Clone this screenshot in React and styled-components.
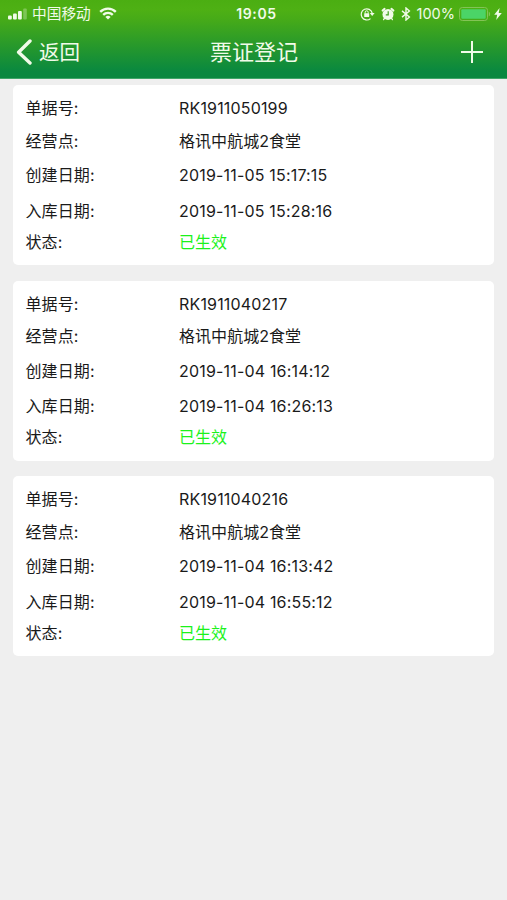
import styled, { createGlobalStyle } from "styled-components";

const GlobalStyle = createGlobalStyle`
  * {
    box-sizing: border-box;
  }
  body {
    margin: 0;
    background-color: #efefef;
    font-family: Inter, "Noto Sans CJK SC", sans-serif;
    color: #1a1a1a;
  }
`;

const Page = styled.div`
  min-height: 100vh;
  background-color: #efefef;
`;

const Header = styled.header`
  height: 79px;
  background: linear-gradient(#4bae12 0%, #4eb014 12%, #47ab18 24%, #26982c 60%, #098840 92%, #098840 100%);
  border-bottom: 1px solid #3fa56a;
  color: #f1fbe9;
`;

const StatusBar = styled.div`
  display: grid;
  grid-template-columns: 1fr auto 1fr;
  align-items: center;
  height: 27px;
  padding: 0 5px 0 8px;
  font-size: 14px;
`;

const StatusGroup = styled.div`
  display: flex;
  align-items: center;
  justify-content: ${(props) => (props.$end ? "flex-end" : "flex-start")};
  height: 27px;
  line-height: 27px;
  white-space: nowrap;

  svg {
    flex: none;
  }
`;

const Carrier = styled.span`
  margin: 2px 8px 0 5px;
  font-size: 14.7px;
`;

const Clock = styled.span`
  padding-left: 3px;
  font-size: 14px;
  font-weight: 600;
  letter-spacing: 0.6px;
`;

const StatusIcons = styled.div`
  display: flex;
  align-items: center;
  gap: 6px;
`;

const Percent = styled.span`
  margin: 0 4px 0 6px;
  font-size: 14.5px;
`;

const NavBar = styled.nav`
  display: grid;
  grid-template-columns: 1fr auto 1fr;
  align-items: center;
  height: 50px;
  padding: 0 24px 0 16px;
`;

const BackButton = styled.button`
  display: flex;
  align-items: center;
  gap: 7px;
  padding: 0;
  border: 0;
  background: none;
  color: inherit;
  font-family: inherit;
  font-size: 20.5px;
  line-height: 30px;
`;

const BackText = styled.span`
  padding-top: 1px;
`;

const Title = styled.h1`
  margin: 0;
  padding-left: 9px;
  font-size: 22px;
  line-height: 30px;
  font-weight: 400;
`;

const AddButton = styled.button`
  display: flex;
  justify-self: end;
  padding: 0;
  border: 0;
  background: none;
  color: inherit;
`;

const List = styled.main`
  display: flex;
  flex-direction: column;
  gap: 15.5px;
  padding: 6px 13px 0;
`;

const Card = styled.section`
  height: 180px;
  padding: 7px 13px 0 12.5px;
  border-radius: 5px;
  background-color: #ffffff;
`;

const Row = styled.div`
  display: grid;
  grid-template-columns: 153.5px 1fr;
  align-items: center;
  height: ${(props) => props.$height}px;
  font-size: 16px;
  line-height: 24px;
`;

const Label = styled.span`
  letter-spacing: 0.1px;
`;

const Value = styled.span`
  color: ${(props) => (props.$active ? "#1bf21b" : "inherit")};
  letter-spacing: ${(props) => props.$spacing || 0}px;
`;

const SignalIcon = () => (
  <svg width="19" height="12" viewBox="0 0 19 12" fill="currentColor">
    <rect x="0" y="7.5" width="3.8" height="4" rx="1" />
    <rect x="5" y="5.5" width="3.8" height="6" rx="1" />
    <rect x="10" y="3" width="3.8" height="8.5" rx="1" />
    <rect x="15.2" y="0.5" width="3.6" height="11" rx="1" opacity="0.3" />
  </svg>
);

const WifiIcon = () => (
  <svg width="18" height="13" viewBox="0 0 18 13" fill="none" stroke="currentColor" strokeWidth="2.4">
    <path d="M1.2 4.8a11.2 11.2 0 0 1 15.6 0" />
    <path d="M4.2 7.8a7 7 0 0 1 9.6 0" />
    <path d="M9 12.6 6.4 10a3.8 3.8 0 0 1 5.2 0z" fill="currentColor" stroke="none" />
  </svg>
);

const RotationLockIcon = () => (
  <svg width="15" height="14" viewBox="0 0 15 14" fill="none" stroke="currentColor">
    <path d="M10.5 11.6A5.6 5.6 0 1 1 12.2 6" strokeWidth="1.2" />
    <path d="M9.8 6h4.8l-2.4 3z" fill="currentColor" stroke="none" />
    <rect x="4.2" y="6.3" width="5" height="3.8" rx="0.5" fill="currentColor" stroke="none" />
    <path d="M5.2 6.5V5.3a1.5 1.5 0 0 1 3 0v1.2" />
  </svg>
);

const AlarmIcon = () => (
  <svg width="14" height="14" viewBox="0 0 14 14">
    <circle cx="7" cy="7.4" r="5.5" fill="currentColor" />
    <path d="M1.6 3.6 3.6 1.8M12.4 3.6 10.4 1.8" stroke="currentColor" strokeWidth="2" strokeLinecap="round" />
    <path d="M3.4 11.4 2.6 12.6M10.6 11.4l.8 1.2" stroke="currentColor" strokeWidth="1.3" strokeLinecap="round" />
    <path d="M7.2 4.2v3.6H4.8" fill="none" stroke="#3fa31c" strokeWidth="1.2" />
  </svg>
);

const BluetoothIcon = () => (
  <svg width="10" height="14" viewBox="0 0 10 14" fill="none" stroke="currentColor" strokeWidth="1.4">
    <path d="M1 3.9 8.4 10 5 13V1l3.4 3L1 10.1" />
  </svg>
);

const BatteryIcon = () => (
  <svg width="32" height="14" viewBox="0 0 32 14">
    <rect x="0.5" y="0.5" width="28" height="13" rx="2.8" fill="none" stroke="#83c356" />
    <rect x="2.3" y="2.3" width="24.4" height="9.4" rx="1" fill="#4bd467" />
    <path d="M29.8 4.7c1.8.6 1.8 4 0 4.6z" fill="#83c356" />
  </svg>
);

const BoltIcon = () => (
  <svg width="11" height="12" viewBox="-3 0 11 12" fill="currentColor">
    <path d="M5.6 0 0.2 6.7h3L2.2 12 7.8 4.9H4.7z" />
  </svg>
);

const BackIcon = () => (
  <svg width="16" height="26" viewBox="0 0 16 26" fill="none" stroke="currentColor" strokeWidth="3.4" strokeLinecap="round" strokeLinejoin="round">
    <path d="M14 2 2.6 13.2 14 24" />
  </svg>
);

const PlusIcon = () => (
  <svg width="22" height="22" viewBox="0 0 22 22" stroke="currentColor" strokeWidth="2">
    <path d="M11 0v22M0 11h22" />
  </svg>
);

const records = [
  {
    no: "RK1911050199",
    place: "格讯中航城2食堂",
    created: "2019-11-05 15:17:15",
    stored: "2019-11-05 15:28:16",
    status: "已生效",
  },
  {
    no: "RK1911040217",
    place: "格讯中航城2食堂",
    created: "2019-11-04 16:14:12",
    stored: "2019-11-04 16:26:13",
    status: "已生效",
  },
  {
    no: "RK1911040216",
    place: "格讯中航城2食堂",
    created: "2019-11-04 16:13:42",
    stored: "2019-11-04 16:55:12",
    status: "已生效",
  },
];

function RecordCard({ record }) {
  return (
    <Card>
      <Row $height={32}>
        <Label>单据号:</Label>
        <Value $spacing={0.17}>{record.no}</Value>
      </Row>
      <Row $height={33.5}>
        <Label>经营点:</Label>
        <Value $spacing={0.05}>{record.place}</Value>
      </Row>
      <Row $height={35.5}>
        <Label>创建日期:</Label>
        <Value $spacing={0.18}>{record.created}</Value>
      </Row>
      <Row $height={35}>
        <Label>入库日期:</Label>
        <Value $spacing={0.18}>{record.stored}</Value>
      </Row>
      <Row $height={27}>
        <Label>状态:</Label>
        <Value $active>{record.status}</Value>
      </Row>
    </Card>
  );
}

function App() {
  return (
    <Page>
      <GlobalStyle />
      <Header>
        <StatusBar>
          <StatusGroup>
            <SignalIcon />
            <Carrier>中国移动</Carrier>
            <WifiIcon />
          </StatusGroup>
          <Clock>19:05</Clock>
          <StatusGroup $end>
            <StatusIcons>
              <RotationLockIcon />
              <AlarmIcon />
              <BluetoothIcon />
            </StatusIcons>
            <Percent>100%</Percent>
            <BatteryIcon />
            <BoltIcon />
          </StatusGroup>
        </StatusBar>
        <NavBar>
          <BackButton>
            <BackIcon />
            <BackText>返回</BackText>
          </BackButton>
          <Title>票证登记</Title>
          <AddButton aria-label="新增">
            <PlusIcon />
          </AddButton>
        </NavBar>
      </Header>
      <List>
        {records.map((record) => (
          <RecordCard key={record.no} record={record} />
        ))}
      </List>
    </Page>
  );
}

export default App;
